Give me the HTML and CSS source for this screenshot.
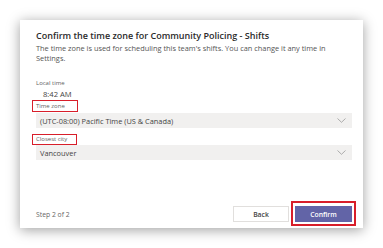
FILE: index.html
```html
<!DOCTYPE html>
<html lang="en">
<head>
  <meta charset="UTF-8">
  <title>Confirm the time zone</title>
  <link rel="stylesheet" href="styles.css">
</head>
<body>
  <div class="dialog">
    <h1 class="title">Confirm the time zone for Community Policing - Shifts</h1>
    <p class="desc">The time zone is used for scheduling this team's shifts. You can change it any time in Settings.</p>

    <div class="local">
      <div class="label">Local time</div>
      <div class="time">8:42 AM</div>
    </div>

    <div class="field">
      <span class="label boxed">Time zone</span>
      <div class="select">
        <span>(UTC-08:00) Pacific Time (US &amp; Canada)</span>
        <svg class="chev" width="9" height="5" viewBox="0 0 9 5"><path d="M0.5 0.5 L4.5 4.3 L8.5 0.5" fill="none" stroke="#9a9a9a" stroke-width="0.8"/></svg>
      </div>
    </div>

    <div class="field">
      <span class="label boxed">Closest city</span>
      <div class="select">
        <span>Vancouver</span>
        <svg class="chev" width="9" height="5" viewBox="0 0 9 5"><path d="M0.5 0.5 L4.5 4.3 L8.5 0.5" fill="none" stroke="#9a9a9a" stroke-width="0.8"/></svg>
      </div>
    </div>

    <div class="footer">
      <span class="step">Step 2 of 2</span>
      <div class="actions">
        <button class="btn back">Back</button>
        <div class="marked"><button class="btn confirm">Confirm</button></div>
      </div>
    </div>
  </div>
</body>
</html>
```

FILE: styles.css
```css
* {
  margin: 0;
  padding: 0;
  box-sizing: border-box;
  font-family: "Open Sans", "Noto Sans", sans-serif;
}
body {
  background: #fff;
  width: 383px;
  height: 248px;
  overflow: hidden;
}

/* Dialog card */
.dialog {
  margin: 20px 0 0 20px;
  width: 343px;
  height: 208px;
  background: #fff;
  box-shadow: 0 2px 12px rgba(0, 0, 0, 0.38);
  padding: 10px 11px 6px 16px;
  display: flex;
  flex-direction: column;
}
.title {
  font-size: 9px;
  font-weight: 600;
  color: #2b2b2b;
  line-height: 12px;
}
.desc {
  font-size: 7.4px;
  color: #555;
  line-height: 10px;
  margin-top: 1px;
}

.label {
  font-size: 6px;
  color: #616161;
  line-height: 8px;
}
.local {
  margin-top: 16px;
}
.time {
  font-size: 7.6px;
  color: #444;
  margin: 2px 0 0 7px;
  line-height: 10px;
}

/* Fields */
.field {
  display: flex;
  flex-direction: column;
  margin-top: 1px;
}
.boxed {
  align-self: flex-start;
  border: 1.5px solid #d81e2a;
  padding: 1px 3px 0 3px;
  margin-left: -4px;
  height: 12px;
  line-height: 8px;
  width: 46px;
}
.select {
  height: 15px;
  background: #f1f0ef;
  display: flex;
  align-items: center;
  justify-content: space-between;
  padding: 0 6px 0 4px;
  font-size: 7.4px;
  color: #444;
  margin-top: 1px;
}
.field + .field {
  margin-top: 6px;
}
.field + .field .boxed {
  width: 45px;
  height: 11px;
  padding-top: 0;
}
.field + .field .select {
  margin-top: 0;
}

/* Footer */
.footer {
  margin-top: auto;
  display: flex;
  justify-content: space-between;
  align-items: center;
}
.step {
  font-size: 6.8px;
  color: #666;
}
.actions {
  display: flex;
  align-items: center;
  gap: 6px;
}
.btn {
  width: 56px;
  height: 16px;
  font-size: 6.8px;
  font-weight: 600;
  border: none;
  cursor: pointer;
  display: block;
}
.back {
  background: #fff;
  border: 1px solid #e1dfdd;
  color: #444;
}
.marked {
  position: relative;
}
/* red annotation frame */
.marked::after {
  content: "";
  position: absolute;
  top: -5px;
  left: -4px;
  right: -4px;
  bottom: -4px;
  border: 2px solid #d81e2a;
}
.confirm {
  width: 57px;
  background: #6264a7;
  color: #fff;
}
```
